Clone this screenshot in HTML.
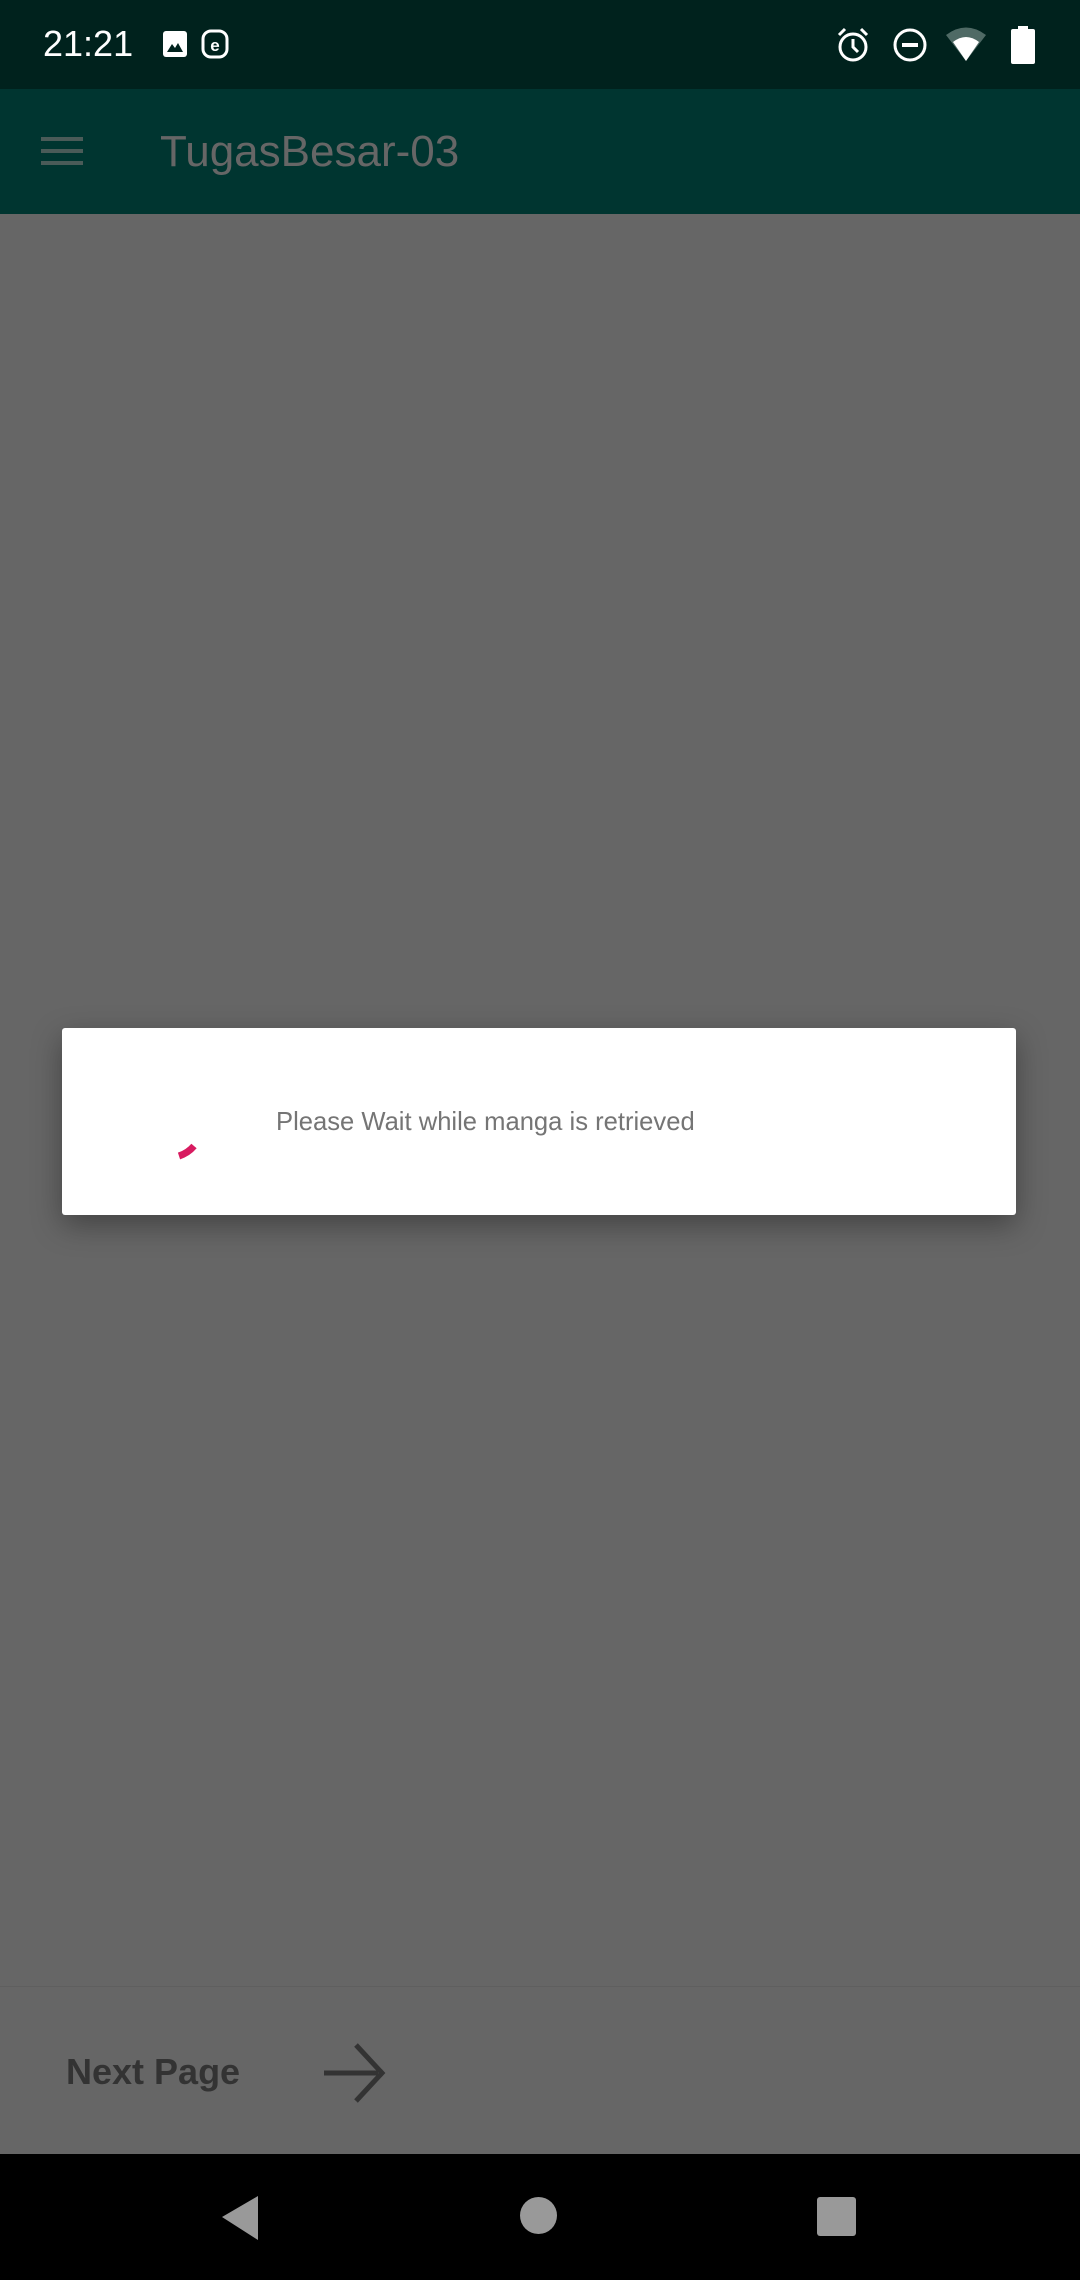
<!DOCTYPE html>
<html><head><meta charset="utf-8"><style>
*{margin:0;padding:0;box-sizing:border-box}
body{width:1080px;height:2280px;overflow:hidden;background:#666;font-family:"Liberation Sans",sans-serif;position:relative}
.sb{position:absolute;left:0;top:0;width:1080px;height:89px;background:#00221d}
.ab{position:absolute;left:0;top:89px;width:1080px;height:125px;background:#003530}
.t{position:absolute;color:#fff}
.dlg{position:absolute;left:62px;top:1028px;width:954px;height:187px;background:#fff;border-radius:3px;box-shadow:0 10px 30px rgba(0,0,0,0.35)}
.bot{position:absolute;left:0;top:1986px;width:1080px;height:168px;background:#666;border-top:1px solid #5f5f5f}
.nav{position:absolute;left:0;top:2154px;width:1080px;height:126px;background:#000}
</style></head><body>
<div class="sb">
<div class="t" style="left:43px;top:23px;font-size:36px;">21:21</div>
<svg style="position:absolute;left:162px;top:30px" width="26" height="28" viewBox="0 0 26 28"><rect x="1" y="1" width="24" height="26" rx="3" fill="#fff"/><path d="M5 22 L10 14 L13 18 L16 13 L21 22Z" fill="#00221d"/></svg>
<svg style="position:absolute;left:201px;top:29px" width="28" height="30" viewBox="0 0 28 30"><rect x="2" y="2" width="24" height="26" rx="8" fill="none" stroke="#fff" stroke-width="3"/><text x="14" y="22" font-size="17" font-weight="bold" text-anchor="middle" fill="#fff" font-family="Liberation Sans">e</text></svg>
<svg style="position:absolute;left:835px;top:26px" width="36" height="38" viewBox="0 0 36 38"><circle cx="18" cy="21" r="13" fill="none" stroke="#fff" stroke-width="3"/><path d="M18 13 V21 L23 26" stroke="#fff" stroke-width="3" fill="none"/><path d="M4 9 L10 3 M32 9 L26 3" stroke="#fff" stroke-width="3"/></svg>
<svg style="position:absolute;left:892px;top:27px" width="36" height="36" viewBox="0 0 36 36"><circle cx="18" cy="18" r="15" fill="none" stroke="#fff" stroke-width="3"/><rect x="10" y="16" width="16" height="4" fill="#fff"/></svg>
<svg style="position:absolute;left:945px;top:26px" width="42" height="36" viewBox="0 0 42 36"><path d="M1 9 Q21 -6 41 9 L21 35Z" fill="#4f6a65"/><path d="M8 16 Q21 6 34 16 L21 35Z" fill="#fff"/></svg>
<svg style="position:absolute;left:1010px;top:26px" width="26" height="38" viewBox="0 0 26 38"><rect x="8" y="0" width="10" height="4" fill="#fff"/><rect x="1" y="3" width="24" height="35" rx="2" fill="#fff"/></svg>
</div>
<div class="ab">
<div style="position:absolute;left:41px;top:48px;width:42px;height:4px;background:#4a5b58"></div>
<div style="position:absolute;left:41px;top:60px;width:42px;height:4px;background:#4a5b58"></div>
<div style="position:absolute;left:41px;top:72px;width:42px;height:4px;background:#4a5b58"></div>
<div style="position:absolute;left:160px;top:38px;font-size:44px;color:#666">TugasBesar-03</div>
</div>
<div class="dlg">
<svg style="position:absolute;left:110px;top:98px" width="40" height="40" viewBox="0 0 40 40"><path d="M7 30 Q16 27 22 20" stroke="#d81b60" stroke-width="7" fill="none"/></svg>
<div style="position:absolute;left:214px;top:80px;font-size:25.6px;color:#757575">Please Wait while manga is retrieved</div>
</div>
<div class="bot">
<div style="position:absolute;left:66px;top:64px;font-size:36px;font-weight:bold;color:#333">Next Page</div>
<svg style="position:absolute;left:322px;top:56px" width="64" height="60" viewBox="0 0 64 60"><path d="M2 30 H56 M34 2 L60 30 L34 58" stroke="#333" stroke-width="5" fill="none"/></svg>
</div>
<div class="nav">
<svg style="position:absolute;left:220px;top:42px" width="40" height="44" viewBox="0 0 40 44"><path d="M38 0 V44 L2 21Z" fill="#999"/></svg>
<div style="position:absolute;left:520px;top:43px;width:37px;height:37px;border-radius:50%;background:#999"></div>
<div style="position:absolute;left:817px;top:43px;width:39px;height:39px;border-radius:3px;background:#999"></div>
</div>
</body></html>
